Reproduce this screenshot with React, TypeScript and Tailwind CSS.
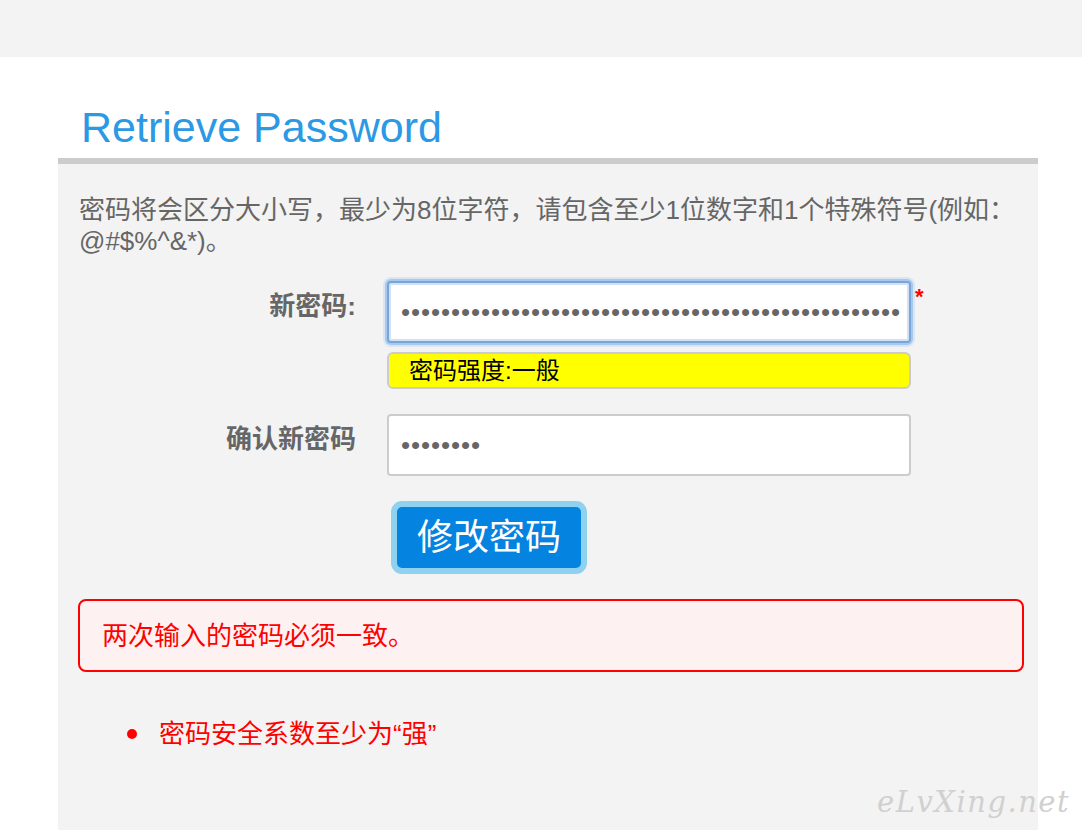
import { useState } from 'react';

const CJK = "font-['Liberation_Sans','Noto_Sans_CJK_SC',sans-serif]";

export default function App() {
  const [newPassword] = useState('a'.repeat(50));
  const [confirmPassword] = useState('b'.repeat(8));

  return (
    <div className={`relative min-h-[830px] flex flex-col bg-white ${CJK}`}>
      <div className="h-[57px] bg-[#f3f3f3]" />

      <div className="ml-[58px] w-[980px] flex flex-col flex-1">
        <div className="h-[101px] flex items-end pb-[9px] pl-[23px]">
          <h1 className="text-[43px] leading-none text-[#2b99e4] font-['Liberation_Sans',sans-serif]">
            Retrieve Password
          </h1>
        </div>

        <div className="flex-1 border-t-[6px] border-[#cccccc] bg-[#f3f3f3] px-[20px] pt-[31px]">
          <p className="text-[26px] leading-[31px] text-[#666666] whitespace-nowrap pl-[1px]">
            密码将会区分大小写，最少为8位字符，请包含至少1位数字和1个特殊符号(例如：
            <br />
            @#$%^&amp;*)。
          </p>

          <div className="mt-[24px] grid grid-cols-[278px_1fr] gap-x-[31px]">
            <label className="pt-[10px] text-right text-[26px] leading-[30px] font-bold text-[#666666]">
              新密码:
            </label>
            <div className="flex flex-col">
              <div className="flex items-start">
                <input
                  type="password"
                  value={newPassword}
                  readOnly
                  className="w-[524px] h-[62px] rounded-[4px] border-2 border-[#78a6da] bg-white pl-[12px] pr-0 text-[26px] tracking-[0.9px] text-[#666666] font-['Liberation_Sans',sans-serif] outline-none shadow-[0_0_0_2px_#a9c8ea,0_0_0_4px_#d8e6f5,inset_0_0_0_2px_#d3e2f3]"
                />
                <span className="ml-[4px] mt-[5px] text-[22px] leading-none font-bold text-[#ff0000] font-['Liberation_Sans',sans-serif]">
                  *
                </span>
              </div>
              <div className="mt-[9px] w-[524px] h-[37px] flex items-center rounded-[6px] border-2 border-[#cccccc] bg-[#ffff00] pl-[20px] text-[24px] leading-none text-black">
                密码强度:一般
              </div>
            </div>

            <label className="mt-[25px] pt-[10px] text-right text-[26px] leading-[30px] font-bold text-[#666666]">
              确认新密码
            </label>
            <div className="mt-[25px]">
              <input
                type="password"
                value={confirmPassword}
                readOnly
                className="w-[524px] h-[62px] rounded-[4px] border-2 border-[#cccccc] bg-white pl-[12px] text-[26px] tracking-[0.9px] text-[#666666] font-['Liberation_Sans',sans-serif] outline-none"
              />
            </div>

            <div />
            <div className="mt-[25px]">
              <button className="ml-[4px] w-[196px] h-[73px] rounded-[11px] border-[6px] border-[#8ed2f0] bg-[#0583e0] text-[36px] leading-none text-white">
                修改密码
              </button>
            </div>
          </div>

          <div className="mt-[25px] w-[946px] h-[73px] flex items-center rounded-[8px] border-2 border-[#ff0000] bg-[#fef1f1] pl-[22px] text-[26px] leading-none text-[#ff0000]">
            两次输入的密码必须一致。
          </div>

          <ul className="mt-[45px]">
            <li className="flex items-center text-[26px] leading-[34px] text-[#ff0000]">
              <span className="ml-[49px] mr-[22px] w-[10px] h-[10px] rounded-full bg-[#ff0000]" />
              密码安全系数至少为“强”
            </li>
          </ul>
        </div>
      </div>

      <span className="absolute left-[877px] top-[781px] text-[29px] italic tracking-[1.5px] text-[#d0d0d0] font-['DejaVu_Serif',serif]">
        eLvXing.net
      </span>
    </div>
  );
}
